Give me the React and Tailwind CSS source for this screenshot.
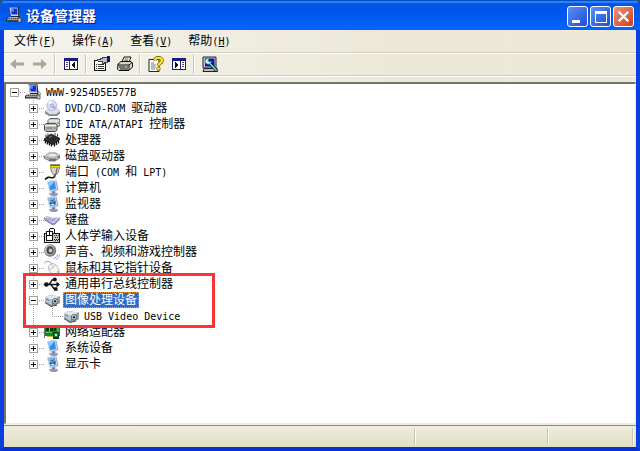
import { Fragment, useState } from "react";

const MONO = "font-['DejaVu_Sans_Mono','Noto_Sans_CJK_SC',monospace] text-[10px]";

// Latin runs use a half-width mono face next to the 12px Chinese glyphs
function Mixed({ children }) {
  return children.split(/([\x20-\x7e]+)/).map((part, i) =>
    /^[\x20-\x7e]+$/.test(part) ? (
      <span key={i} className={MONO}>
        {part}
      </span>
    ) : (
      <Fragment key={i}>{part}</Fragment>
    )
  );
}

function Svg({ children, size = "size-4", crisp = false }) {
  return (
    <svg
      viewBox="0 0 16 16"
      className={`${size} shrink-0`}
      shapeRendering={crisp ? "crispEdges" : "auto"}
      aria-hidden="true"
    >
      {children}
    </svg>
  );
}

/* ---- device icons ---- */

const ComputerOld = () => (
  <Svg>
    <path d="M3.500 0h9l1 10H5z" fill="#20242c" />
    <path d="M3.500 .500h8l.800 8.500H5z" fill="#d4d4d0" />
    <path d="M5 1.500h6l.500 6H5.700z" fill="#0b2fe0" />
    <path d="M5 1.500h2.500l.500 3H5.300z" fill="#5a92ff" />
    <path d="M3 10h10l2 2v2.500H0V12z" fill="#20242c" />
    <path d="M3 10.300h9l.500 1.200H1.500z" fill="#e8e8e4" />
    <path d="M1 12h12v1.300H1z" fill="#a0a09a" />
    <path d="M3 11.500h9" stroke="#333" strokeWidth=".800" strokeDasharray="1 1" />
    <path d="M13 7.500c3 1 3 3 1 4s-1 3 1.500 2.500" fill="none" stroke="#6a6a64" />
    <path d="M12 11h3v4h-3z" fill="#c4c4bc" stroke="#44443e" strokeWidth=".700" />
  </Svg>
);

const Disc = () => (
  <Svg>
    <path d="M1 11l4-3h8l3 3v2.500L13 16H5l-4-2.500z" fill="#88888e" />
    <path d="M1 11l4-3h8l3 3-3 2.500H5z" fill="#dedee2" />
    <circle cx="7.800" cy="5.500" r="5" fill="#d9dcf5" stroke="#a3a8cf" strokeWidth=".700" />
    <path d="M7.800 5.500L4 2.500A5 5 0 0 1 8 .700z" fill="#fff" />
    <path d="M7.800 5.500l4.700 1.200a5 5 0 0 1-2.500 3z" fill="#aab2ea" />
    <circle cx="7.800" cy="5.500" r="1.400" fill="#fff" stroke="#6c74b5" strokeWidth=".800" />
    <path d="M5 13.700h7.500" stroke="#f2f2f4" strokeWidth=".800" />
  </Svg>
);

const Ide = () => (
  <Svg>
    <path d="M6 2.500h8.500L16 4v5l-1.500 1.500H4V4.500z" fill="#c6cac8" stroke="#4a5050" strokeWidth=".900" />
    <path d="M4.500 5H15" stroke="#fff" />
    <path d="M2 7.500h9.500l1.500 1.500v5l-1.500 1.500H2L.500 14V9z" fill="#b4b9b6" stroke="#3c4242" strokeWidth=".900" />
    <path d="M1 9.700h11.500" stroke="#fff" />
    <path d="M2.500 12h6" stroke="#666" />
    <path d="M10 12h1.500M13.500 7h1.500" stroke="#19a819" />
  </Svg>
);

const Cpu = () => (
  <Svg>
    <path d="M7 1.500l9 4.500-7 5.500L0 6.500z" fill="#2a2a2a" />
    <path d="M0 6.500l9 5v1.500L0 8.500zM16 6l-7 5.500V13l7-5.500z" fill="#000" />
    <path d="M1.500 8v3.500M3.500 9v3.500M5.500 10v3.500M7.500 11v3.500M10.500 11v3.500M12.500 9.500V13M14.500 8v3.500" stroke="#111" strokeWidth="1.300" />
    <path d="M2 5V2.500M4 4V1.500M11 3.500V1M13.500 4.500V2" stroke="#333" />
    <path d="M5 5.500l3-1.500" stroke="#8a8a8a" />
  </Svg>
);

const Disk = () => (
  <Svg>
    <path d="M0 8l5-3.500h7L16 7v3l-5 3.500H6L0 10.500z" fill="#707274" />
    <path d="M0 8l5-3.500h7L16 7l-5 3.500H6z" fill="#c6c6c6" />
    <ellipse cx="8.500" cy="7.200" rx="4.500" ry="1.800" fill="#efefef" stroke="#a0a0a0" strokeWidth=".700" />
    <path d="M1 9.500l4 2" stroke="#ddd" />
    <path d="M12 11l2-1.300" stroke="#e8e8e8" />
  </Svg>
);

const Port = () => (
  <Svg>
    <path d="M6.500 3h9l-1 5-2 2.500H9.500L7.500 8z" fill="#d2d2cc" stroke="#6a6a66" strokeWidth=".800" />
    <path d="M13 4l-1 6" stroke="#6a6a66" strokeWidth="1.200" />
    <path d="M6 1.200h10" stroke="#2e2a00" strokeWidth="1.500" />
    <path d="M6 2.200h10" stroke="#f4e200" strokeWidth="1.600" strokeDasharray="1.400 .600" />
    <path d="M11 10.500c0 3.500-2.500 3.500-4.500 3S4 13 1 15.500" fill="none" stroke="#111" strokeWidth="1.700" />
    <path d="M10.300 10v2.500" stroke="#777" />
  </Svg>
);

function MonitorBlue({ inner = false }) {
  return (
    <Svg>
      <ellipse cx="9.500" cy="14" rx="4.500" ry="1.800" fill="#a6a6c2" />
      <path d="M7 14.500c1 1 4.500 1 6.500 0" fill="none" stroke="#6a6a92" strokeWidth=".700" />
      <path d="M8 10h3v3.500H8z" fill="#7d7daa" />
      <path d="M3 1l9.500-.700 2 9.700-3 1.500H5.500z" fill="#a8acc4" />
      <path d="M3 1l8.500-.700 1.500 9.500-7.500 1.500z" fill="#cfe0f4" />
      <path d="M4 2l6.800-.700L12 9l-5.800 1.200z" fill="#2f93ea" />
      <path d="M4 2l6.800-.700L5.500 7z" fill="#8ccbff" />
      {inner && (
        <>
          <path d="M5.500 4.500l5.500-.800.500 3.500-5 .800z" fill="#1d4f86" />
          <path d="M5.800 5l2.500 1.200L10.800 4" fill="none" stroke="#b8f1ff" />
          <path d="M6 3l2-.300" stroke="#f45a4a" />
          <path d="M7 8.700l3-.500" stroke="#e8fbff" />
        </>
      )}
    </Svg>
  );
}

const Keyboard = () => (
  <Svg>
    <path d="M0 5.500L3 4l5 2 8-.500v2l-5.500 5.500H8L0 8z" fill="#8c8cb6" />
    <path d="M0 5.500L3 4l5 2 8-.500-6 5.500H8z" fill="#d3d3f2" />
    <path d="M2.500 6.300l7 3.200M4.500 5.800l7 3M9 6.800l4.500 0" stroke="#8585bb" strokeWidth="1.100" strokeDasharray="1.200 .8" />
  </Svg>
);

const Hid = () => (
  <Svg crisp>
    <path d="M0 5h16v10H0z" fill="#111" />
    <path d="M1 6h8v8H1z" fill="#e6e6e6" />
    <path d="M9 6h6v8H9z" fill="#c4c4bc" />
    <path d="M10 7h1v1h-1zM12 7h1v1h-1zM14 7h1v1h-1zM11 9h1v1h-1zM13 9h1v1h-1zM10 11h1v1h-1zM12 11h1v1h-1zM14 11h1v1h-1zM11 12h1v1h-1zM13 12h1v1h-1z" fill="#222" />
    <path d="M2 3h7v10H2zM5 1h1v2H5zM6 0h4v1H6zM10 1h1v4h-1z" fill="#111" />
    <path d="M3 4h2v3H3zM6 4h2v3H6zM3 8h5v4H3z" fill="#fff" />
  </Svg>
);

const Sound = () => (
  <Svg>
    <ellipse cx="6.200" cy="6.500" rx="6" ry="6.200" fill="#77777c" />
    <ellipse cx="5.500" cy="6" rx="5" ry="5.300" fill="#c2c2c6" />
    <ellipse cx="6" cy="6.300" rx="3.600" ry="4" fill="#4a4a50" />
    <ellipse cx="6.500" cy="6.500" rx="1.800" ry="2" fill="#c9c9d0" />
    <path d="M9.500 14.500c2-.500 3.500-2 4-4.500M12 15.500c2-.800 3.300-2.500 3.500-5" fill="none" stroke="#9c9ce0" />
  </Svg>
);

const Mouse = () => (
  <Svg>
    <path d="M0 3.500C2 .500 6 .500 7.500 4" fill="none" stroke="#9a9a9a" />
    <path d="M4.500 6.500c1-3 6-4 8.500-.500s3 8-.500 9S3.500 11 4.500 6.500z" fill="#f4f4f4" stroke="#b0b0b0" strokeWidth=".900" />
    <path d="M5 9c2.500 0 5.500-1.500 6.500-4.500M7.500 4.500l1.500 3.500" fill="none" stroke="#c0c0c0" strokeWidth=".900" />
    <path d="M9 15c3 .500 5.500-1 5.300-4" fill="none" stroke="#8f8f98" />
  </Svg>
);

const Usb = () => (
  <Svg>
    <path d="M2 8.500h12M4 8.500c3 0 2.500-5 5.500-5H12M6 8.500c3 0 2 4.500 5 4.500h1" fill="none" stroke="#111" strokeWidth="1.500" />
    <circle cx="2.300" cy="8.500" r="2.300" fill="#111" />
    <path d="M12.500 5.500L16 8.500l-3.500 3z" fill="#111" />
    <circle cx="10.800" cy="3.500" r="2" fill="#111" />
    <path d="M10 11.300h3.500v3.500H10z" fill="#111" />
  </Svg>
);

const Camera = () => (
  <Svg>
    <path d="M1 5.500L5 3l11 1.500V11l-3 1.500-6 1.500-6-4z" fill="#6e7882" />
    <path d="M1 5.500L5 3l11 1.500L12 6.500 8 8z" fill="#e2e7ec" />
    <path d="M1 5.500L8 8v5.500L1 9.500z" fill="#bcc4cc" />
    <path d="M9 7.500l7-2.500v6l-4 1.700-3 .300z" fill="#97a2ac" />
    <ellipse cx="11" cy="9.300" rx="2.600" ry="2.800" fill="#e4e9ee" stroke="#3c4650" strokeWidth=".800" />
    <ellipse cx="11" cy="9.300" rx="1.200" ry="1.400" fill="#22303e" />
    <path d="M2 7l3 1.500" stroke="#3a75c8" />
    <path d="M1 10.500l6 4 6-1.500" fill="none" stroke="#3e4246" />
  </Svg>
);

const Network = () => (
  <Svg crisp>
    <path d="M0 3h1v11H0z" fill="#777" />
    <path d="M1 3h15v9H1z" fill="#0c8a1c" />
    <path d="M2 4h3v3H2zM6 4h3v3H6zM10 4h2v3h-2z" fill="#06380e" />
    <path d="M13 4h2v5h-2z" fill="#2cc044" />
    <path d="M2 8h6v1H2zM5 4v5h1V4z" fill="#62d862" />
    <path d="M3 12h6v1H3z" fill="#d9bd36" />
    <path d="M9 8h6v7H9z" fill="#0c3a14" />
    <path d="M10 9h4v4h-4z" fill="#1f8a34" />
    <path d="M11 10h2v2h-2z" fill="#b4eab0" />
  </Svg>
);

/* ---- toolbar icons ---- */

const PaneIcon = ({ flip }) => (
  <Svg crisp>
    <path d="M1 2h14v12H1z" fill="#1a1a80" />
    <path d="M2 5h12v8H2z" fill="#fff" />
    {flip ? (
      <>
        <path d="M9 5h1v8H9z" fill="#1a1a80" />
        <path d="M4 6h1v1h1v1h1v2H6v1H5v1H4z" fill="#111" />
        <path d="M11 6h2v1h-2zM11 8h2v1h-2zM11 10h2v1h-2z" fill="#555" />
      </>
    ) : (
      <>
        <path d="M6 5h1v8H6z" fill="#1a1a80" />
        <path d="M12 6h-1v1h-1v1H9v2h1v1h1v1h1z" fill="#111" />
        <path d="M3 6h2v1H3zM3 8h2v1H3zM3 10h2v1H3z" fill="#555" />
      </>
    )}
  </Svg>
);

const PropsIcon = () => (
  <Svg crisp>
    <path d="M0 4h12v11H0z" fill="#111" />
    <path d="M1 5h10v9H1z" fill="#fff" />
    <path d="M2 8h1v1H2zM4 8h6v1H4zM2 10h1v1H2zM4 10h6v1H4zM2 12h1v1H2zM4 12h6v1H4z" fill="#333" />
    <path d="M3 3h3V2h2V1h6v6h-3v1H8V6H4V5H3z" fill="#444" />
    <path d="M4 4h3V3h2V2h4v4h-3v1H9V5H4z" fill="#bdbdbd" />
    <path d="M13 0h3v6h-3z" fill="#151580" />
  </Svg>
);

const PrinterIcon = () => (
  <Svg>
    <path d="M5 6l2-5h7l-2 5z" fill="#fff" stroke="#111" />
    <path d="M7.500 3h4M7 4.800h4" stroke="#333" strokeWidth=".800" />
    <path d="M1 8l3-2.500h10L15.500 7v4L12 14.500H2L.500 13z" fill="#d6d6ce" stroke="#111" />
    <path d="M1 9h11l3-2.500M12 9v5" fill="none" stroke="#111" />
    <path d="M2 11h9M3 13h8" stroke="#111" />
    <path d="M8 11h2" stroke="#e9dc22" strokeWidth="1.200" />
  </Svg>
);

const HelpIcon = () => (
  <Svg>
    <path d="M1 3.500h10v12H1z" fill="#fff" stroke="#222" />
    <path d="M3 7h3M3 9h5M3 11h5M3 13h4" stroke="#777" />
    <path d="M7 4.500C7 1 14 1 14 4.500c0 2.500-3.500 2.500-3.500 5" fill="none" stroke="#5a5000" strokeWidth="3.600" />
    <path d="M7 4.500C7 1 14 1 14 4.500c0 2.500-3.500 2.500-3.500 5" fill="none" stroke="#ffe818" strokeWidth="2.300" />
    <circle cx="10.500" cy="12.700" r="1.800" fill="#ffe818" stroke="#5a5000" strokeWidth=".700" />
  </Svg>
);

const ScanIcon = () => (
  <Svg>
    <path d="M1 1h13v11H1z" fill="#c8c8c8" stroke="#222" />
    <path d="M3 2.500h9.500v8H3z" fill="#1515a8" />
    <path d="M2 12.500h13l.500 3H1z" fill="#bcbcb4" stroke="#222" />
    <path d="M5 4.500l9.500 10" stroke="#111" strokeWidth="3.200" />
    <path d="M5 4.500l9.500 10" stroke="#58dcf0" strokeWidth="1.800" />
    <path d="M3 6c0-3 2-4 4.500-3.500L6 4.500l1.500 1.500 2-1C9.500 8 6.500 9 4 7.500z" fill="#c8f8ff" stroke="#0a6b90" strokeWidth=".600" />
  </Svg>
);

const Arrow = ({ right }) => (
  <Svg>
    <path
      d={right ? "M15 8L9 3v3.500H1v3h8V13z" : "M1 8l6-5v3.500h8v3H7V13z"}
      fill="#aca899"
    />
  </Svg>
);

const before = [
  ["DVD/CD-ROM 驱动器", Disc],
  ["IDE ATA/ATAPI 控制器", Ide],
  ["处理器", Cpu],
  ["磁盘驱动器", Disk],
  ["端口 (COM 和 LPT)", Port],
  ["计算机", MonitorBlue],
  ["监视器", () => <MonitorBlue inner />],
  ["键盘", Keyboard],
  ["人体学输入设备", Hid],
  ["声音、视频和游戏控制器", Sound],
  ["鼠标和其它指针设备", Mouse],
];

const after = [
  ["网络适配器", Network],
  ["系统设备", MonitorBlue],
  ["显示卡", () => <MonitorBlue inner />],
];

const menus = [
  ["文件", "F"],
  ["操作", "A"],
  ["查看", "V"],
  ["帮助", "H"],
];

// Dotted branch lines with the optional plus / minus box
function Branch({ box, up = true, down = true }) {
  return (
    <svg viewBox="0 0 19 16" className="h-4 w-[19px] shrink-0" shapeRendering="crispEdges" aria-hidden="true">
      <g stroke="#a0a0a0" strokeDasharray="1 1">
        {up && <path d="M8.500 0v8" />}
        {down && <path d="M8.500 8v8" />}
        <path d="M8 8.500h11" />
      </g>
      {box && (
        <>
          <path d="M4.500 4.500h8v8h-8z" fill="#fff" stroke="#a3a196" />
          <path d={box === "plus" ? "M6 8.500h5M8.500 6v5" : "M6 8.500h5"} stroke="#000" />
        </>
      )}
    </svg>
  );
}

function Row({ label, icon: Icon, box = "plus", up, down, selected, onSelect, onToggle }) {
  return (
    <div className="flex h-4 items-center">
      {box === "none" ? (
        <Branch up={up} down={down} />
      ) : (
        <button type="button" aria-label={`展开 ${label}`} onClick={onToggle}>
          <Branch box={box} up={up} down={down} />
        </button>
      )}
      <Icon />
      <button
        type="button"
        onClick={onSelect}
        className={
          selected
            ? "ml-[3px] h-4 bg-[#316ac5] px-[2px] pb-[2px] leading-[14px] whitespace-pre text-white outline-1 -outline-offset-1 outline-dotted outline-[#e0a040]"
            : "ml-[3px] h-4 px-[2px] pb-[2px] leading-[14px] whitespace-pre"
        }
      >
        <Mixed>{label}</Mixed>
      </button>
    </div>
  );
}

function ToolButton({ label, children }) {
  return (
    <button type="button" aria-label={label} className="flex w-[23px] justify-center">
      {children}
    </button>
  );
}

const Divider = () => <div className="mx-[3px] h-5 w-[2px] border-r border-l border-r-white border-l-[#cbc7b5]" />;

const captionButton =
  "flex size-[21px] items-center justify-center rounded-[3px] border border-white";

export default function App() {
  const [selected, setSelected] = useState("图像处理设备");
  const [open, setOpen] = useState(true);

  const row = (label, Icon, extra) => (
    <Row
      key={label}
      label={label}
      icon={Icon}
      selected={selected === label}
      onSelect={() => setSelected(label)}
      {...extra}
    />
  );

  return (
    <div className="h-screen bg-[#1b5b77] font-['Noto_Sans_CJK_SC',sans-serif] text-[12px] text-black">
      <div className="flex h-full flex-col overflow-hidden rounded-t-[7px] bg-[#0a3fe0]">
        <header className="flex h-[30px] shrink-0 items-center bg-linear-to-b from-[#0a55dd] from-0% via-[#0054e9] via-30% to-[#0264fc] pr-[6px] pl-[6px] shadow-[inset_0_1px_0_#0848c0,inset_0_3px_1px_#2b86fb]">
          <ComputerOld />
          <h1 className="ml-1 flex-1 text-[14px] leading-5 font-bold text-white [text-shadow:1px_1px_#0a1883]">
            设备管理器
          </h1>
          <div className="flex gap-[2px] pt-[3px]">
            <button type="button" aria-label="最小化" className={`${captionButton} bg-linear-to-br from-[#5d8ff5] to-[#1c4bd5]`}>
              <Svg size="size-[17px]" crisp>
                <path d="M3 11h7v3H3z" fill="#fff" />
              </Svg>
            </button>
            <button type="button" aria-label="最大化" className={`${captionButton} bg-linear-to-br from-[#5d8ff5] to-[#1c4bd5]`}>
              <Svg size="size-[17px]" crisp>
                <path d="M3 3h11v11H3zM4 6v7h9V6z" fill="#fff" fillRule="evenodd" />
              </Svg>
            </button>
            <button type="button" aria-label="关闭" className={`${captionButton} bg-linear-to-br from-[#ee9078] to-[#cf3a10]`}>
              <Svg size="size-[17px]">
                <path d="M3.500 3.500l9 9M12.500 3.500l-9 9" stroke="#fff" strokeWidth="2.200" />
              </Svg>
            </button>
          </div>
        </header>

        <div className="flex min-h-0 flex-1 flex-col border-x-4 border-b-4 border-[#0a3fe0] border-b-[#0831d0] bg-linear-to-r from-[#f4f3ee] to-[#ece9d8] to-60%">
          <nav className="flex h-[22px] shrink-0 items-center pl-[2px]">
            {menus.map(([name, key]) => (
              <button key={key} type="button" className="px-2 leading-4">
                {name}
                <span className={MONO}>
                  (<u>{key}</u>)
                </span>
              </button>
            ))}
          </nav>

          <div className="flex h-6 shrink-0 items-center border-y border-t-[#d0cdbd] border-b-[#d0cdbd] pl-[1px] shadow-[inset_0_1px_#fff,0_1px_#fff]">
            <ToolButton label="后退"><Arrow /></ToolButton>
            <ToolButton label="前进"><Arrow right /></ToolButton>
            <Divider />
            <ToolButton label="显示/隐藏控制台树"><PaneIcon /></ToolButton>
            <Divider />
            <ToolButton label="属性"><PropsIcon /></ToolButton>
            <ToolButton label="打印"><PrinterIcon /></ToolButton>
            <Divider />
            <ToolButton label="帮助"><HelpIcon /></ToolButton>
            <ToolButton label="显示/隐藏操作窗格"><PaneIcon flip /></ToolButton>
            <Divider />
            <ToolButton label="扫描检测硬件改动"><ScanIcon /></ToolButton>
          </div>

          <main className="mt-[6px] min-h-0 flex-1 overflow-hidden border-t-2 border-r border-b border-l-2 border-t-[#77756b] border-r-[#f1efe2] border-b-[#f1efe2] border-l-[#77756b] bg-white">
            {row("WWW-9254D5E577B", ComputerOld, { box: "minus", up: false, down: false })}
            <div className="pl-[19px]">
              {before.map(([label, Icon]) => row(label, Icon))}
              <div className="relative">
                {row("通用串行总线控制器", Usb)}
                {row("图像处理设备", Camera, {
                  box: open ? "minus" : "plus",
                  onToggle: () => setOpen(!open),
                })}
                {open && (
                  <div className="flex">
                    <svg viewBox="0 0 19 16" className="h-4 w-[19px]" shapeRendering="crispEdges" aria-hidden="true">
                      <path d="M8.500 0v16" stroke="#a0a0a0" strokeDasharray="1 1" />
                    </svg>
                    {row("USB Video Device", Camera, { box: "none", down: false })}
                  </div>
                )}
                <div className="pointer-events-none absolute -top-[3px] -bottom-1 -left-[2px] w-48 border-[3px] border-[#f83434]" />
              </div>
              {after.map(([label, Icon], i) => row(label, Icon, { down: i < after.length - 1 }))}
            </div>
          </main>

          <footer className="mt-px flex h-[22px] shrink-0 border-t border-[#8f8d80] bg-linear-to-b from-[#f0eee2] from-0% via-[#ece9d8] via-20% to-[#e0e0c4] py-[2px]">
            <div className="flex-1 border-r border-[#c5c2b0]" />
            <div className="w-[133px] border-r border-l border-r-[#c5c2b0] border-l-white" />
            <div className="w-[85px] border-r border-l border-r-[#c5c2b0] border-l-white" />
            <div className="w-[3px] border-l border-white" />
          </footer>
        </div>
      </div>
    </div>
  );
}
